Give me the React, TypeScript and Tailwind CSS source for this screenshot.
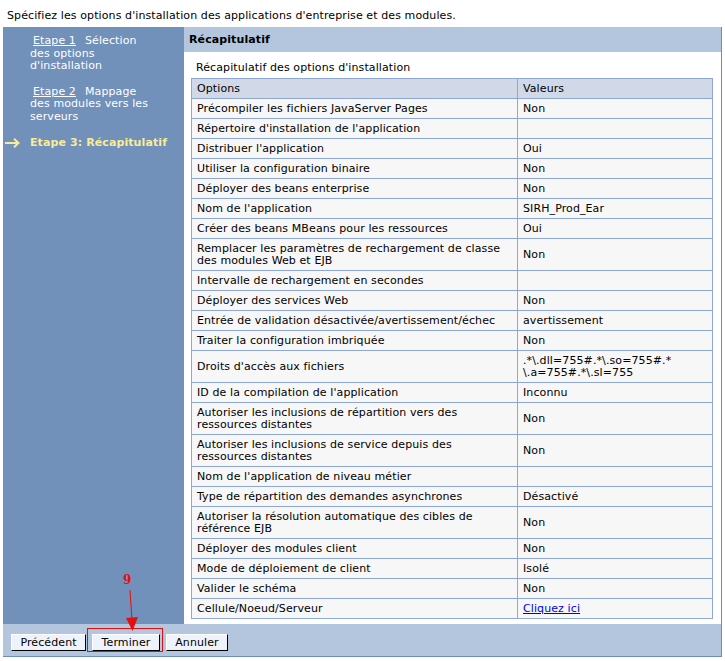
import React from "react";

type Row = { o: string; v: React.ReactNode; link?: boolean };

const rows: Row[] = [
  { o: "Précompiler les fichiers JavaServer Pages", v: "Non" },
  { o: "Répertoire d'installation de l'application", v: "" },
  { o: "Distribuer l'application", v: "Oui" },
  { o: "Utiliser la configuration binaire", v: "Non" },
  { o: "Déployer des beans enterprise", v: "Non" },
  { o: "Nom de l'application", v: "SIRH_Prod_Ear" },
  { o: "Créer des beans MBeans pour les ressources", v: "Oui" },
  { o: "Remplacer les paramètres de rechargement de classe des modules Web et EJB", v: "Non" },
  { o: "Intervalle de rechargement en secondes", v: "" },
  { o: "Déployer des services Web", v: "Non" },
  { o: "Entrée de validation désactivée/avertissement/échec", v: "avertissement" },
  { o: "Traiter la configuration imbriquée", v: "Non" },
  {
    o: "Droits d'accès aux fichiers",
    v: (
      <>
        .*\.dll=755#.*\.so=755#.*
        <br />
        \.a=755#.*\.sl=755
      </>
    ),
  },
  { o: "ID de la compilation de l'application", v: "Inconnu" },
  { o: "Autoriser les inclusions de répartition vers des ressources distantes", v: "Non" },
  { o: "Autoriser les inclusions de service depuis des ressources distantes", v: "Non" },
  { o: "Nom de l'application de niveau métier", v: "" },
  { o: "Type de répartition des demandes asynchrones", v: "Désactivé" },
  { o: "Autoriser la résolution automatique des cibles de référence EJB", v: "Non" },
  { o: "Déployer des modules client", v: "Non" },
  { o: "Mode de déploiement de client", v: "Isolé" },
  { o: "Valider le schéma", v: "Non" },
  { o: "Cellule/Noeud/Serveur", v: "Cliquez ici", link: true },
];

function Btn({ children, w }: { children: React.ReactNode; w: string }) {
  return (
    <button
      className={`${w} h-[17px] bg-[#eef2fb] border border-t-white border-l-white border-b-black border-r-black text-black text-[11px] leading-[12px] tracking-[0.1px] flex items-center justify-center`}
    >
      {children}
    </button>
  );
}

function Step({ n, title, rest, className }: { n: string; title: string; rest: string; className?: string }) {
  return (
    <div className={`ml-[27px] w-[124px] leading-[12.5px] ${className ?? ""}`}>
      <div className="flex pl-[3px] gap-[9px]">
        <span className="underline">Etape {n}</span>
        <span>{title}</span>
      </div>
      <div>{rest}</div>
    </div>
  );
}

export default function App() {
  return (
    <div className="w-[725px] h-[661px] bg-white text-black font-['DejaVu_Sans',sans-serif] text-[11px] leading-[13px] tracking-[0.1px] relative">
      <div className="h-[27px] pl-[7px] pt-[9px]">
        Spécifiez les options d'installation des applications d'entreprise et des modules.
      </div>
      <div className="ml-[3px] w-[719px] border-r border-b border-[#6d8cba] bg-[#7190ba]">
        <div className="flex">
          <div className="w-[181px] bg-[#7190ba] text-white pt-[8px]">
            <Step n="1" title="Sélection" rest="des options d'installation" />
            <Step n="2" title="Mappage" rest="des modules vers les serveurs" className="mt-[13px]" />
            <div className="flex items-center mt-[14px] leading-[12.5px] text-[#f8ec9b] font-bold">
              <svg width="15" height="10" viewBox="0 0 15 10" className="ml-[2px] mr-[10px]">
                <path d="M0 5 H13.5 M9 0.8 L13.5 5 L9 9.2" stroke="#f8ec9b" strokeWidth="2" fill="none" />
              </svg>
              Etape 3: Récapitulatif
            </div>
          </div>
          <div className="flex-1 bg-white">
            <div className="h-[25px] bg-[#b4c5de] font-bold pl-[5px] flex items-center">Récapitulatif</div>
            <div className="pl-[7px] pb-[5px]">
              <div className="pl-[5px] pt-[9px] pb-[4px]">Récapitulatif des options d'installation</div>
              <table className="w-[521px] border-collapse border border-[#8da8d8] table-fixed leading-[12px]">
                <colgroup>
                  <col className="w-[326px]" />
                  <col className="w-[195px]" />
                </colgroup>
                <thead>
                  <tr className="bg-[#d1d9e9]">
                    <th className="border border-[#8da8d8] text-left font-normal px-[5px] pt-[4px] pb-[3px]">Options</th>
                    <th className="border border-[#8da8d8] text-left font-normal px-[5px] pt-[4px] pb-[3px]">Valeurs</th>
                  </tr>
                </thead>
                <tbody>
                  {rows.map((r, i) => (
                    <tr key={i} className="bg-[#f7f7f7]">
                      <td className="border border-[#8da8d8] px-[5px] pt-[4px] pb-[3px] align-middle">{r.o}</td>
                      <td className="border border-[#8da8d8] px-[5px] pt-[4px] pb-[3px] align-middle">
                        {r.link ? <span className="text-[#0000ee] underline">{r.v}</span> : r.v}
                      </td>
                    </tr>
                  ))}
                </tbody>
              </table>
            </div>
          </div>
        </div>
        <div className="h-[32px] bg-[#b4c5de] flex items-start gap-[6px] pl-[8px] pt-[10px]">
          <Btn w="w-[75px]">Précédent</Btn>
          <Btn w="w-[68px]">Terminer</Btn>
          <Btn w="w-[62px]">Annuler</Btn>
        </div>
      </div>
      {/* annotation */}
      <div className="absolute left-[87px] top-[628px] w-[76px] h-[24px] border border-[#e01010]" />
      <div className="absolute left-[123px] top-[574px] text-[#e01010] font-bold font-['DejaVu_Serif',serif] text-[12px]">9</div>
      <svg className="absolute left-[120px] top-[589px]" width="20" height="46" viewBox="0 0 20 46">
        <path d="M10 1 L12 32" stroke="#e01010" strokeWidth="1" />
        <path d="M6 29 L12.5 42 L18 28 Z" fill="#e01010" />
      </svg>
    </div>
  );
}
